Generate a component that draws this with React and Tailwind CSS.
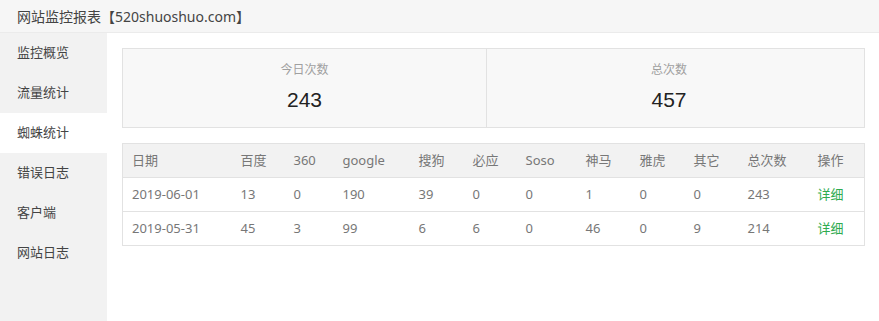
const menu = ["监控概览", "流量统计", "蜘蛛统计", "错误日志", "客户端", "网站日志"];

const cols = [
  { name: "日期", w: "w-[109px]" },
  { name: "百度", w: "w-[53px]" },
  { name: "360", w: "w-[49px]" },
  { name: "google", w: "w-[76px]" },
  { name: "搜狗", w: "w-[54px]" },
  { name: "必应", w: "w-[53px]" },
  { name: "Soso", w: "w-[60px]" },
  { name: "神马", w: "w-[54px]" },
  { name: "雅虎", w: "w-[54px]" },
  { name: "其它", w: "w-[54px]" },
  { name: "总次数", w: "w-[70px]" },
  { name: "操作", w: "" },
];

const rows = [
  ["2019-06-01", 13, 0, 190, 39, 0, 0, 1, 0, 0, 243],
  ["2019-05-31", 45, 3, 99, 6, 6, 0, 46, 0, 9, 214],
];

function Stat({ label, value, divider }) {
  return (
    <div
      className={
        "w-[364px] flex flex-col items-center " +
        (divider ? "border-r border-[#e2e2e2]" : "")
      }
    >
      <span className="mt-[12px] text-[12px] leading-[18px] text-[#a0a0a0]">{label}</span>
      <span className="mt-[9px] text-[21px] leading-[24px] text-[#222] font-['Liberation_Sans',sans-serif]">
        {value}
      </span>
    </div>
  );
}

export default function App() {
  const active = "蜘蛛统计";

  return (
    <div className="w-[879px] h-[321px] flex flex-col bg-white font-['Noto_Sans','Noto_Sans_CJK_SC',sans-serif] overflow-hidden">
      <header className="h-[33px] shrink-0 flex items-center pl-[17px] bg-[#f6f6f6] border-b border-[#ebebeb] text-[14px] text-[#444]">
        网站监控报表【520shuoshuo.com】
      </header>
      <div className="flex flex-1">
        <aside className="w-[107px] bg-[#f2f2f2] shrink-0">
          {menu.map((m) => (
            <div
              key={m}
              className={
                "h-[40px] flex items-center pl-[17px] text-[13px] text-[#444] " +
                (m === active ? "bg-white" : "")
              }
            >
              {m}
            </div>
          ))}
        </aside>
        <main className="flex-1 p-[15px] pr-[14px]">
          <div className="flex h-[80px] border border-[#e2e2e2] bg-[#f8f8f8]">
            <Stat label="今日次数" value="243" divider />
            <Stat label="总次数" value="457" />
          </div>
          <table className="mt-[15px] w-full border-collapse border border-[#e2e2e2] text-[13px] text-[#777] table-fixed">
            <thead>
              <tr className="bg-[#f2f2f2] h-[34px]">
                {cols.map((c) => (
                  <th key={c.name} className={"text-left font-normal pl-[9px] " + c.w}>
                    {c.name}
                  </th>
                ))}
              </tr>
            </thead>
            <tbody>
              {rows.map((r) => (
                <tr key={r[0]} className="h-[34px] border-t border-[#e2e2e2]">
                  {r.map((v, i) => (
                    <td key={i} className="pl-[9px]">
                      {v}
                    </td>
                  ))}
                  <td className="pl-[9px] text-[#2fab4f]">详细</td>
                </tr>
              ))}
            </tbody>
          </table>
        </main>
      </div>
    </div>
  );
}
